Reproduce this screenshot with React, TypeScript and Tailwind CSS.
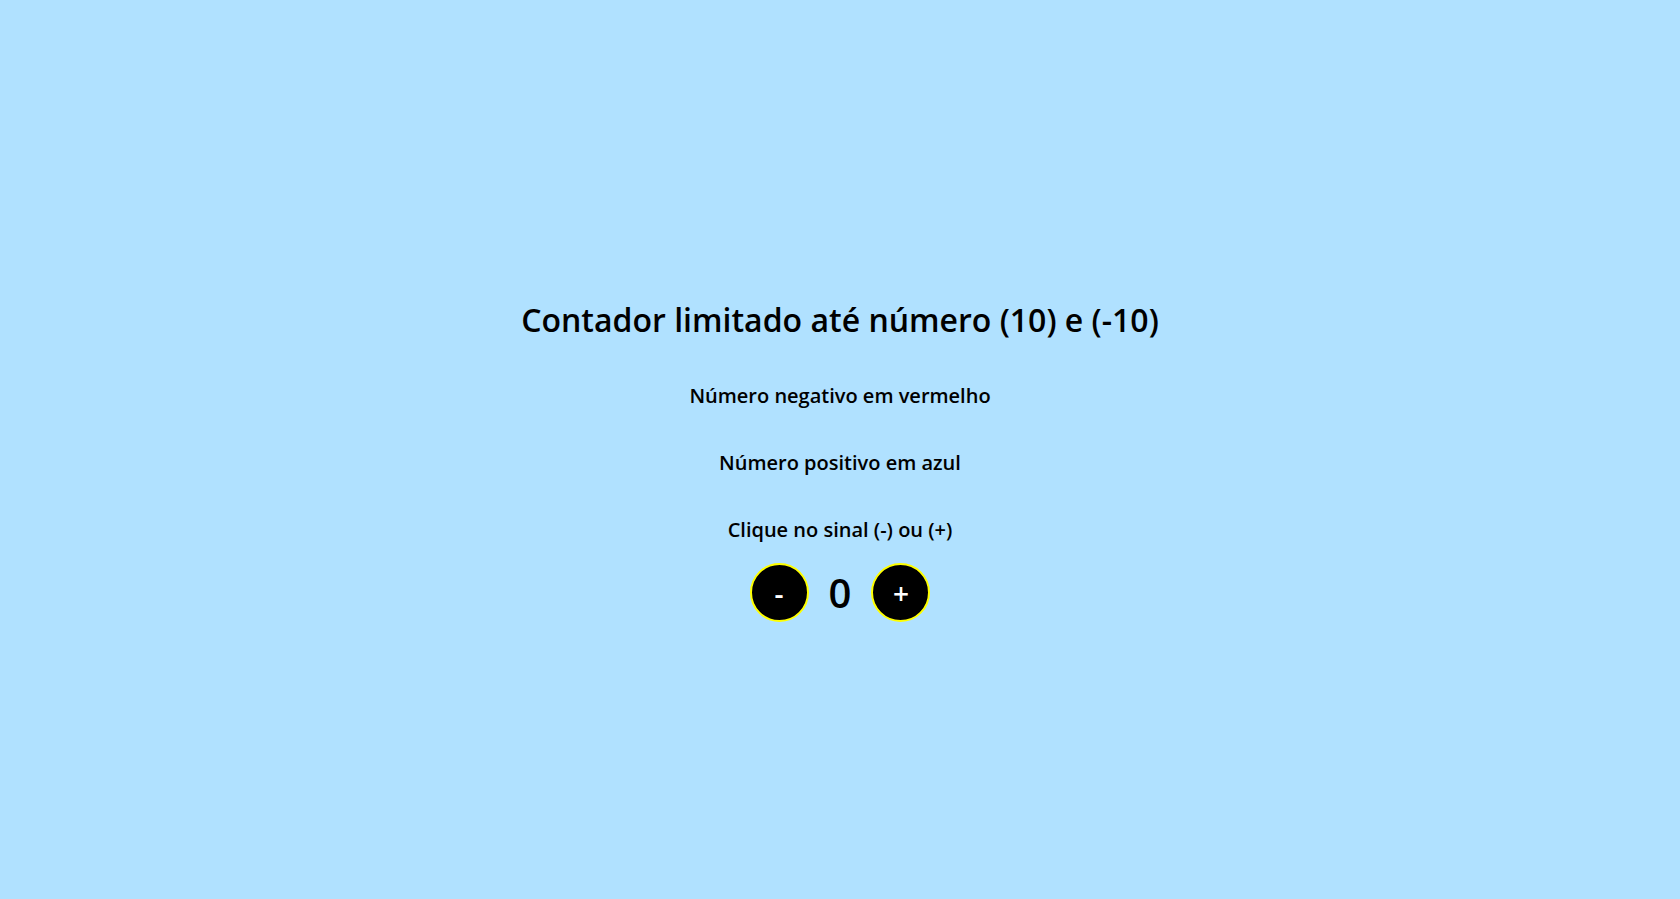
import { useState } from "react"

const App = () => {
  const [count, setCount] = useState(0)

  const dec = () => setCount((c) => (c > -10 ? c - 1 : c))
  const inc = () => setCount((c) => (c < 10 ? c + 1 : c))

  const color = count < 0 ? "text-red-600" : count > 0 ? "text-blue-700" : "text-black"

  return (
    <div className="min-h-screen w-full bg-[#b0e1ff] flex flex-col items-center pt-[296px] font-['Open_Sans',sans-serif] text-black">
      <h1 className="text-[32px] leading-[48px] font-semibold">
        Contador limitado até número (10) e (-10)
      </h1>
      <p className="mt-[37px] text-[20px] leading-[30px] font-semibold">Número negativo em vermelho</p>
      <p className="mt-[37px] text-[20px] leading-[30px] font-semibold">Número positivo em azul</p>
      <p className="mt-[37px] text-[20px] leading-[30px] font-semibold">Clique no sinal (-) ou (+)</p>
      <div className="mt-[18px] flex items-center">
        <button
          onClick={dec}
          className="w-[59px] h-[59px] rounded-full bg-black border-2 border-[#ffff00] text-white text-[28px] leading-none font-semibold flex items-center justify-center"
        >
          -
        </button>
        <span className={`${color} mx-5 text-[40px] leading-none font-semibold`}>{count}</span>
        <button
          onClick={inc}
          className="w-[59px] h-[59px] rounded-full bg-black border-2 border-[#ffff00] text-white text-[28px] leading-none font-semibold flex items-center justify-center"
        >
          +
        </button>
      </div>
    </div>
  )
}

export default App
